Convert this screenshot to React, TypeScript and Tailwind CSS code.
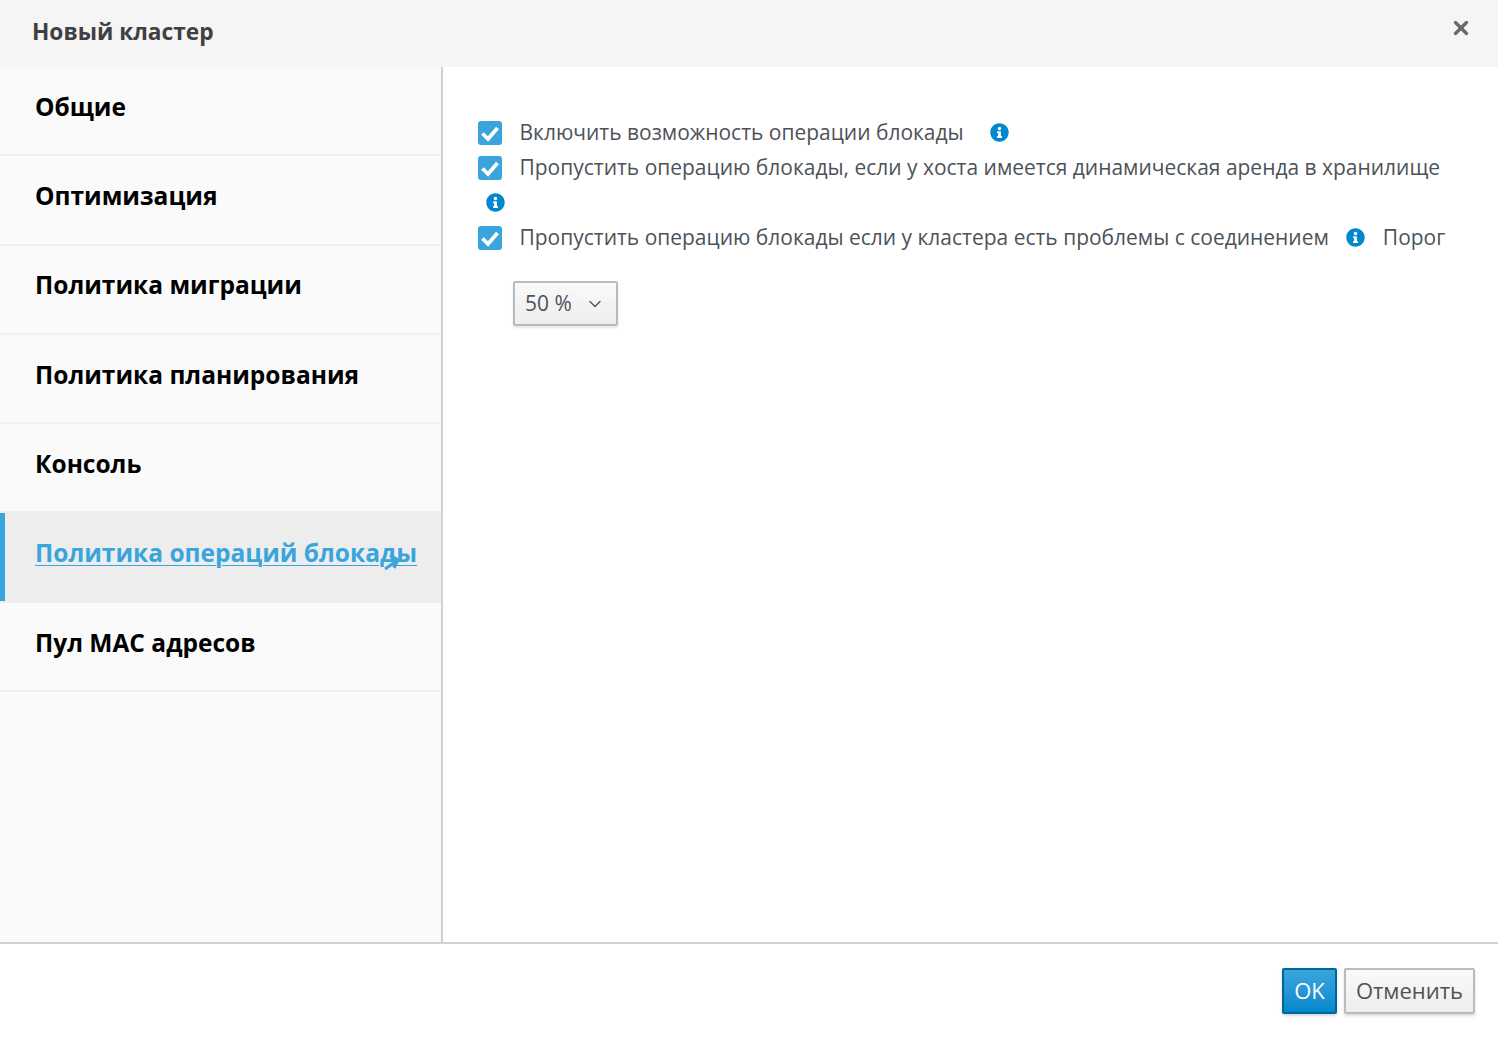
import React from "react";
import { ChevronDown, X } from "lucide-react";

const NAV_ITEMS = [
  "Общие",
  "Оптимизация",
  "Политика миграции",
  "Политика планирования",
  "Консоль",
  "Политика операций блокады",
  "Пул MAC адресов",
];

const ACTIVE = "Политика операций блокады";

const InfoIcon = () => (
  <svg viewBox="0 0 512 512" className="w-[19px] h-[19px] shrink-0 -mt-[1px]" fill="#0088ce">
    <path d="M256 8C119 8 8 119 8 256s111 248 248 248 248-111 248-248S393 8 256 8zm0 90c26 0 47 21 47 47s-21 47-47 47-47-21-47-47 21-47 47-47zm66 290c0 7-6 13-13 13h-106c-7 0-13-6-13-13v-28c0-7 6-13 13-13h15v-72h-15c-7 0-13-6-13-13v-28c0-7 6-13 13-13h78c7 0 13 6 13 13v113h15c7 0 13 6 13 13v28z" />
  </svg>
);

const CheckBox = () => (
  <span className="w-[24px] h-[24px] shrink-0 rounded-[3px] bg-[#39a5dc] flex items-center justify-center">
    <svg viewBox="0 0 24 24" className="w-[24px] h-[24px]" fill="none" stroke="#fff" strokeWidth="3.800">
      <path d="M4.500 12.500 L10 18 L19.500 7" />
    </svg>
  </span>
);

export default function App() {
  return (
    <div className="w-[1498px] h-[1043px] flex flex-col bg-white overflow-hidden font-['Open_Sans',sans-serif]">
      {/* Header */}
      <div className="h-[67px] shrink-0 bg-[#f5f5f5] flex items-start justify-between pl-[32px] pr-[26px]">
        <h1 className="mt-[15px] text-[22.700px] leading-[34px] font-bold text-[#404040]">Новый кластер</h1>
        <X size={22} strokeWidth={3.6} className="mt-[17px] text-[#6a6a6a]" />
      </div>

      <div className="flex-1 flex min-h-0">
        {/* Sidebar */}
        <aside className="w-[443px] shrink-0 bg-[#fafafa] border-r-2 border-[#d1d1d1]">
          {NAV_ITEMS.map((item) => {
            const active = item === ACTIVE;
            return (
              <div
                key={item}
                className={`relative h-[89.3px] flex items-center pl-[35px] text-[24.500px] font-bold whitespace-nowrap ${
                  active
                    ? "pb-[10px] bg-[#ededed] text-[#39a5dc] underline underline-offset-[3px] decoration-[1px]"
                    : "pb-[7px] border-b-2 border-[#f0f0f0] text-black"
                }`}
              >
                {active && <span className="absolute left-0 top-0 bottom-[2px] w-[5px] bg-[#39a5dc]" />}
                {item}
                {active && (
                  <svg viewBox="0 0 20 22" className="absolute left-[381px] top-[36px] w-[20px] h-[22px]" fill="none" stroke="#39a5dc" strokeWidth="3">
                    <path d="M4 20 L17 11 M9 6 L17 11 L13 19" />
                  </svg>
                )}
              </div>
            );
          })}
        </aside>

        {/* Content */}
        <main className="flex-1 pl-[35px] pt-[51px] text-[20.980px] leading-[30px] text-[#4d5258]">
          <div className="flex items-center h-[30px]">
            <CheckBox />
            <span className="ml-[17.500px] mr-[26px] pb-[2px]">Включить возможность операции блокады</span>
            <InfoIcon />
          </div>
          <div className="flex items-center h-[35px] mt-[2px]">
            <CheckBox />
            <span className="ml-[17.500px] pb-[2px] whitespace-nowrap">Пропустить операцию блокады, если у хоста имеется динамическая аренда в хранилище</span>
          </div>
          <div className="h-[35px] pl-[8px] flex items-center">
            <InfoIcon />
          </div>
          <div className="flex items-center h-[35px]">
            <CheckBox />
            <span className="ml-[17.500px] mr-[17px] pb-[2px] whitespace-nowrap">Пропустить операцию блокады если у кластера есть проблемы с соединением</span>
            <InfoIcon />
            <span className="ml-[18px] pb-[2px]">Порог</span>
          </div>
          <div className="mt-[26px] ml-[35px] w-[105px] h-[45px] border-2 border-[#bbbbbb] rounded-[2px] bg-gradient-to-b from-[#fafafa] to-[#ededed] shadow-[0_2px_3px_rgba(3,3,3,0.1)] flex items-center justify-between pl-[10px] pr-[11px]">
            <span className="pb-[2px]">50 %</span>
            <ChevronDown size={20} strokeWidth={1.600} className="text-[#4d5258]" />
          </div>
        </main>
      </div>

      {/* Footer */}
      <div className="h-[101px] shrink-0 border-t-2 border-[#d1d1d1] bg-white flex items-start justify-end gap-[7px] pt-[24px] pr-[23px] text-[22px]">
        <button className="w-[55px] h-[46px] pb-[1px] border-2 border-[#00659c] rounded-[2px] bg-gradient-to-b from-[#39a5dc] to-[#0088ce] text-white shadow-[0_2px_3px_rgba(3,3,3,0.15)]">OK</button>
        <button className="w-[131px] h-[46px] pb-[1px] border-2 border-[#bbbbbb] rounded-[2px] bg-gradient-to-b from-[#fafafa] to-[#ededed] text-[#4d5258] shadow-[0_2px_3px_rgba(3,3,3,0.15)]">Отменить</button>
      </div>
    </div>
  );
}
